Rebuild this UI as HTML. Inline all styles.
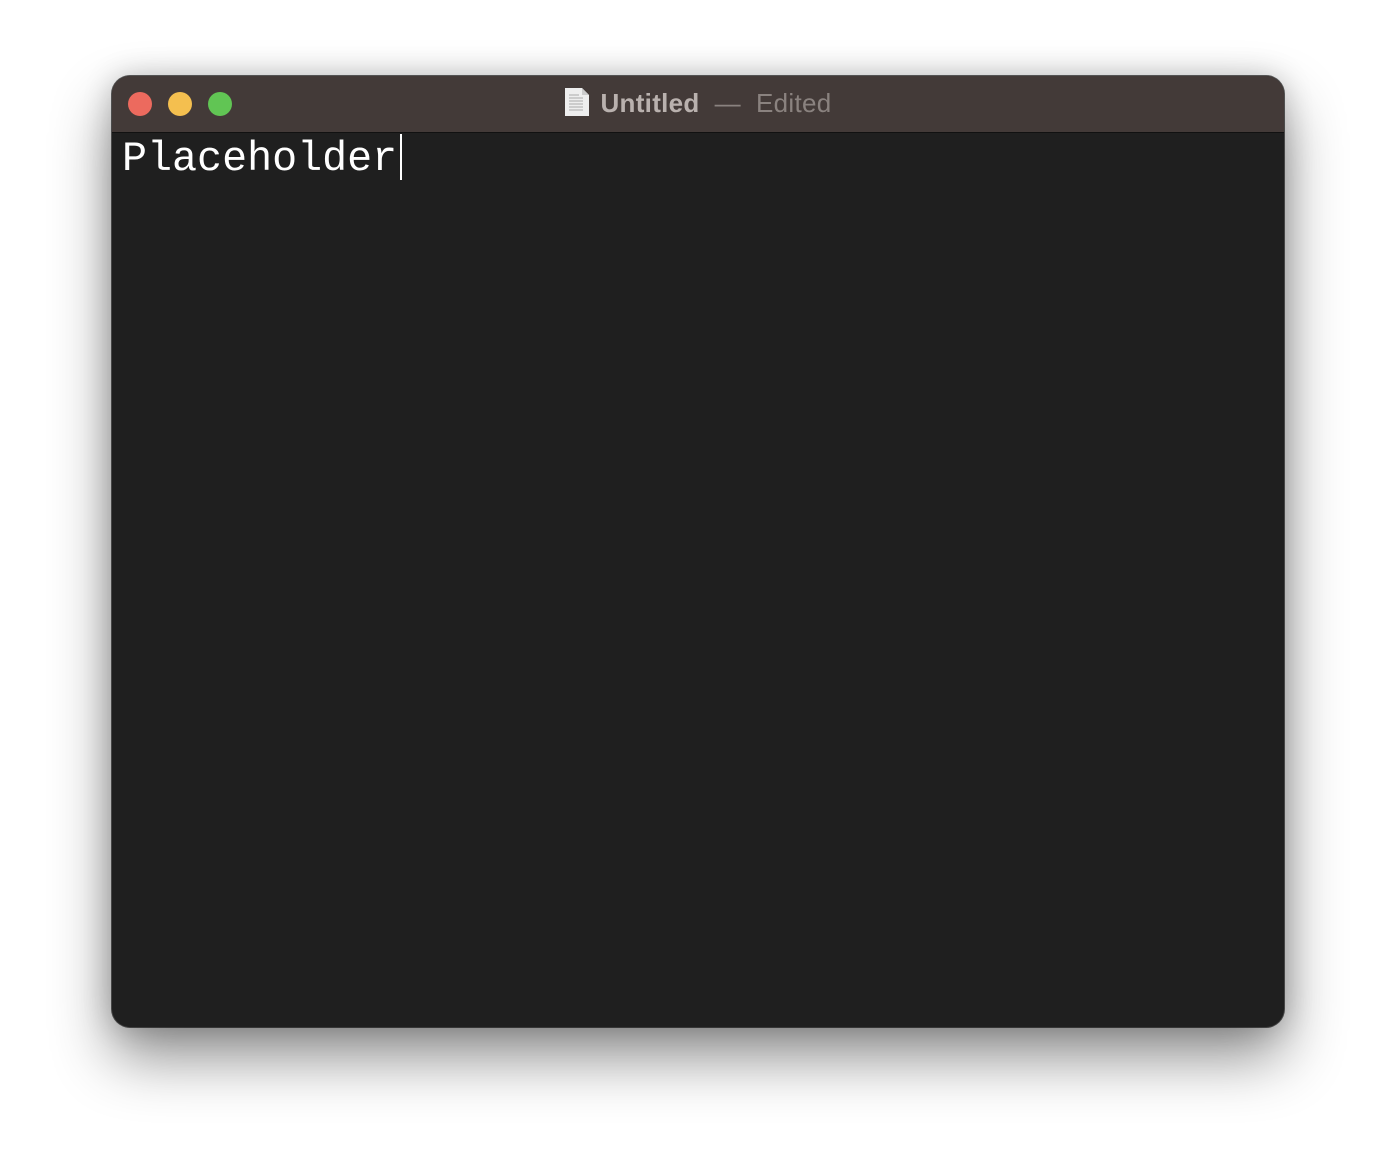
<!DOCTYPE html>
<html><head><style>
html,body{margin:0;padding:0;width:1396px;height:1176px;background:#fff;overflow:hidden;}
.win{position:absolute;left:112px;top:76px;width:1172px;height:951px;border-radius:18px;background:#1f1f1f;overflow:hidden;
box-shadow:0 30px 60px rgba(0,0,0,.45),0 0 0 1px #5a5a5a, 0 0 30px rgba(0,0,0,.2);}
.tb{position:absolute;left:0;top:0;width:100%;height:56px;background:#433a38;border-bottom:1px solid #111;}
.dot{position:absolute;top:16px;width:24px;height:24px;border-radius:50%;}
.title{position:absolute;top:11px;left:0;width:100%;text-align:center;font:26px "Liberation Sans",sans-serif;color:#8a827f;white-space:nowrap;letter-spacing:0.3px;}
.title b{color:#b9b1ae;}
.txt{position:absolute;left:10px;top:59px;font:41.7px "Liberation Mono",monospace;color:#fff;line-height:48px;}
.cur{position:absolute;left:288px;top:58px;width:2px;height:46px;background:#fff;}
</style></head><body>
<div class="win">
<div class="tb">
<div class="dot" style="left:16px;background:#ec6a5e"></div>
<div class="dot" style="left:56px;background:#f4bf4f"></div>
<div class="dot" style="left:96px;background:#61c554"></div>
<div class="title"><svg width="26" height="30" viewBox="0 0 26 30" style="vertical-align:-5px;margin-right:10px"><path d="M1 1h17l7 7v21H1z" fill="#eee"/><path d="M18 1v7h7" fill="#ccc"/><g stroke="#aaa" stroke-width="1"><path d="M5 8h10M5 11h14M5 14h14M5 17h14M5 20h14M5 23h14"/></g></svg><b>Untitled</b>&nbsp; —&nbsp; Edited</div>
</div>
<div class="txt">Placeholder</div>
<div class="cur"></div>
</div>
</body></html>
